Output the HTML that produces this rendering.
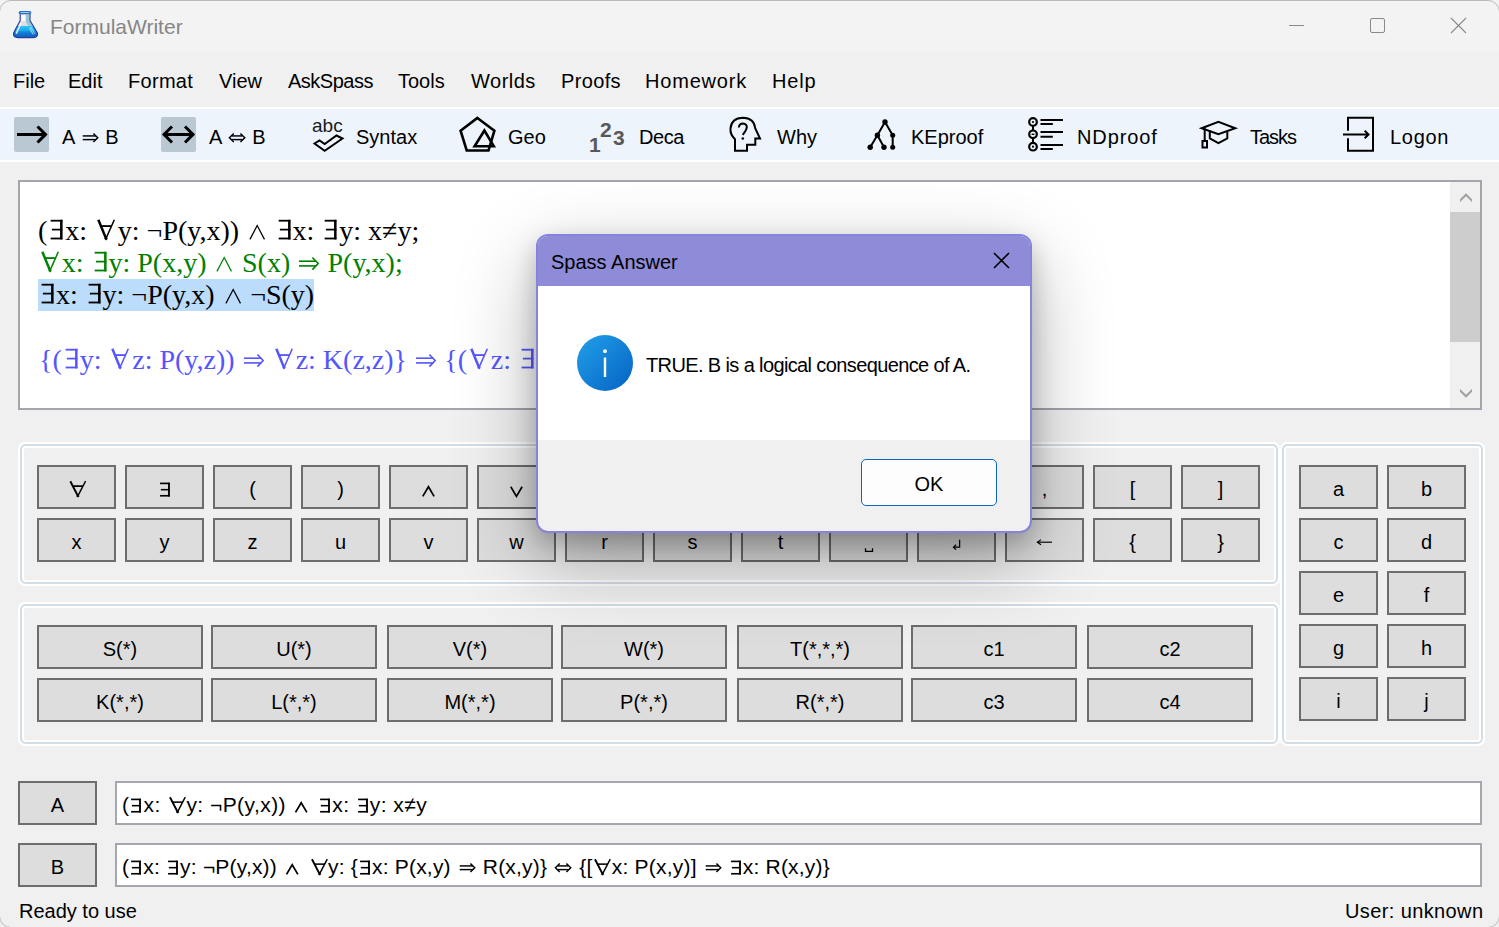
<!DOCTYPE html>
<html><head><meta charset="utf-8"><title>FormulaWriter</title>
<style>
html,body{margin:0;padding:0}
body{width:1499px;height:927px;position:relative;overflow:hidden;background:#f0f0f0;font-family:'Liberation Sans', sans-serif}
.t{position:absolute;white-space:pre}
svg{display:block}
svg.gl{display:inline-block}
</style></head><body>
<div style="position:absolute;left:0px;top:0px;width:1499px;height:51px;box-sizing:border-box;background:#f3f3f3"></div>
<div style="position:absolute;left:-1px;top:0px;width:1501px;height:928px;box-sizing:border-box;border:1px solid #b9b9b9;border-radius:12px;pointer-events:none;z-index:50;background:transparent"></div>
<svg style="position:absolute;left:0px;top:0px" width="50" height="45" viewBox="0 0 50 45">
<defs>
<linearGradient id="liq" x1="0" y1="0" x2="0" y2="1"><stop offset="0" stop-color="#30c4f6"/><stop offset="0.42" stop-color="#18a6ea"/><stop offset="0.5" stop-color="#1684da"/><stop offset="1" stop-color="#0a5cc0"/></linearGradient>
<linearGradient id="gls" x1="0" y1="0" x2="0" y2="1"><stop offset="0" stop-color="#e6ecef"/><stop offset="1" stop-color="#c8d1d6"/></linearGradient>
</defs>
<path d="M20.2,14 V20.6 L13.6,33 Q12.6,37.4 18,37.6 H33 Q38.4,37.4 37.4,33 L30,20.6 V14 Z" fill="url(#gls)"/>
<path d="M16.5,26 H33.6 L37.4,33 Q38.4,37.4 33,37.6 H18 Q12.6,37.4 13.6,33 Z" fill="url(#liq)"/>
<path d="M25.5,14.5 H29.6 V21 L32.5,26 H28.5 L25.5,21 Z" fill="#86c2d4" opacity="0.85"/>
<rect x="21.5" y="15" width="4" height="6" fill="#ffffff"/>
<path d="M16.2,33.6 L21.2,23" stroke="#ffffff" stroke-width="1.5" opacity="0.9"/>
<path d="M30.6,26.8 L34.6,33.6 M29.4,27.8 L33,34.4" stroke="#e6f6ff" stroke-width="0.8" opacity="0.9"/>
<path d="M20.2,14 V20.6 L13.6,33 Q12.6,37.4 18,37.6 H33 Q38.4,37.4 37.4,33 L30,20.6 V14" fill="none" stroke="#2e3a9c" stroke-width="1.1"/>
<rect x="18.7" y="11" width="12.6" height="3.2" rx="1.6" fill="#1e72d0"/>
<rect x="20.4" y="11.9" width="9.2" height="1.1" rx="0.55" fill="#b8c8d8"/>
</svg>
<div class="t" style="left:50px;top:16.22px;font-size:21px;line-height:21px;color:#868686;font-family:'Liberation Sans', sans-serif;">FormulaWriter</div>
<div style="position:absolute;left:1289px;top:25px;width:15px;height:1px;box-sizing:border-box;background:#8a8a8a"></div>
<div style="position:absolute;left:1370px;top:18px;width:15px;height:15px;box-sizing:border-box;border:1px solid #8a8a8a;border-radius:2px"></div>
<svg style="position:absolute;left:1450px;top:17px" width="17" height="17" viewBox="0 0 17 17"><path d="M1,1 L16,16 M16,1 L1,16" stroke="#8a8a8a" stroke-width="1.1"/></svg>
<div style="position:absolute;left:0px;top:51px;width:1499px;height:56px;box-sizing:border-box;background:#f0f0f0"></div>
<div class="t" style="left:13px;top:71.07px;font-size:20px;line-height:20px;color:#000;font-family:'Liberation Sans', sans-serif;letter-spacing:0px">File</div>
<div class="t" style="left:68px;top:71.07px;font-size:20px;line-height:20px;color:#000;font-family:'Liberation Sans', sans-serif;letter-spacing:0px">Edit</div>
<div class="t" style="left:128px;top:71.07px;font-size:20px;line-height:20px;color:#000;font-family:'Liberation Sans', sans-serif;letter-spacing:0.3px">Format</div>
<div class="t" style="left:219px;top:71.07px;font-size:20px;line-height:20px;color:#000;font-family:'Liberation Sans', sans-serif;letter-spacing:0px">View</div>
<div class="t" style="left:288px;top:71.07px;font-size:20px;line-height:20px;color:#000;font-family:'Liberation Sans', sans-serif;letter-spacing:-0.5px">AskSpass</div>
<div class="t" style="left:398px;top:71.07px;font-size:20px;line-height:20px;color:#000;font-family:'Liberation Sans', sans-serif;letter-spacing:0px">Tools</div>
<div class="t" style="left:471px;top:71.07px;font-size:20px;line-height:20px;color:#000;font-family:'Liberation Sans', sans-serif;letter-spacing:0.5px">Worlds</div>
<div class="t" style="left:561px;top:71.07px;font-size:20px;line-height:20px;color:#000;font-family:'Liberation Sans', sans-serif;letter-spacing:0.35px">Proofs</div>
<div class="t" style="left:645px;top:71.07px;font-size:20px;line-height:20px;color:#000;font-family:'Liberation Sans', sans-serif;letter-spacing:0.8px">Homework</div>
<div class="t" style="left:772px;top:71.07px;font-size:20px;line-height:20px;color:#000;font-family:'Liberation Sans', sans-serif;letter-spacing:0.8px">Help</div>
<div style="position:absolute;left:0px;top:107px;width:1499px;height:2px;box-sizing:border-box;background:#ffffff"></div>
<div style="position:absolute;left:0px;top:109px;width:1499px;height:51px;box-sizing:border-box;background:#edf4fc"></div>
<div style="position:absolute;left:0px;top:160px;width:1499px;height:2px;box-sizing:border-box;background:#ffffff"></div>
<div style="position:absolute;left:14px;top:117px;width:35px;height:35px;box-sizing:border-box;background:#bac8d3;border-radius:2px"></div>
<div style="position:absolute;left:161px;top:117px;width:35px;height:35px;box-sizing:border-box;background:#bac8d3;border-radius:2px"></div>
<svg style="position:absolute;left:14px;top:117px" width="35" height="35" viewBox="0 0 35 35"><path d="M3,17.4 H31.5 M23.5,9.5 L31.5,17.4 L23.5,25.5" fill="none" stroke="#000" stroke-width="3"/></svg>
<svg style="position:absolute;left:161px;top:117px" width="35" height="35" viewBox="0 0 35 35"><path d="M3,17.4 H32 M11,9.5 L3,17.4 L11,25.5 M24,9.5 L32,17.4 L24,25.5" fill="none" stroke="#000" stroke-width="3"/></svg>
<div class="t" style="left:62px;top:126.57px;font-size:20px;line-height:20px;color:#000;font-family:'Liberation Sans', sans-serif;letter-spacing:0px">A <svg class="gl" width="0.997em" height="1.050em" viewBox="0 -800 950 1000" style="vertical-align:-0.210em"><g fill="none" stroke="currentColor" stroke-linejoin="miter"><path d="M130,-375 H760" stroke-width="70"/><path d="M130,-200 H760" stroke-width="70"/><path d="M640,-490 L845,-287 L640,-85" stroke-width="70"/></g></svg> B</div>
<div class="t" style="left:209px;top:126.57px;font-size:20px;line-height:20px;color:#000;font-family:'Liberation Sans', sans-serif;letter-spacing:0px">A <svg class="gl" width="0.997em" height="1.050em" viewBox="0 -800 950 1000" style="vertical-align:-0.210em"><g fill="none" stroke="currentColor" stroke-linejoin="miter"><path d="M230,-375 H730" stroke-width="70"/><path d="M230,-200 H730" stroke-width="70"/><path d="M640,-490 L845,-287 L640,-85" stroke-width="70"/><path d="M320,-490 L115,-287 L320,-85" stroke-width="70"/></g></svg> B</div>
<div class="t" style="left:356px;top:126.57px;font-size:20px;line-height:20px;color:#000;font-family:'Liberation Sans', sans-serif;letter-spacing:0px">Syntax</div>
<div class="t" style="left:508px;top:126.57px;font-size:20px;line-height:20px;color:#000;font-family:'Liberation Sans', sans-serif;letter-spacing:0px">Geo</div>
<div class="t" style="left:639px;top:126.57px;font-size:20px;line-height:20px;color:#000;font-family:'Liberation Sans', sans-serif;letter-spacing:-0.4px">Deca</div>
<div class="t" style="left:777px;top:126.57px;font-size:20px;line-height:20px;color:#000;font-family:'Liberation Sans', sans-serif;letter-spacing:0px">Why</div>
<div class="t" style="left:911px;top:126.57px;font-size:20px;line-height:20px;color:#000;font-family:'Liberation Sans', sans-serif;letter-spacing:0px">KEproof</div>
<div class="t" style="left:1077px;top:126.57px;font-size:20px;line-height:20px;color:#000;font-family:'Liberation Sans', sans-serif;letter-spacing:0.9px">NDproof</div>
<div class="t" style="left:1250px;top:126.57px;font-size:20px;line-height:20px;color:#000;font-family:'Liberation Sans', sans-serif;letter-spacing:-1px">Tasks</div>
<div class="t" style="left:1390px;top:126.57px;font-size:20px;line-height:20px;color:#000;font-family:'Liberation Sans', sans-serif;letter-spacing:0.7px">Logon</div>
<div class="t" style="left:312px;top:115.92px;font-size:19px;line-height:19px;color:#1a1a1a;font-family:'Liberation Sans', sans-serif;letter-spacing:0px">abc</div>
<svg style="position:absolute;left:310px;top:130px" width="36" height="24" viewBox="0 0 36 24"><path d="M4.5,13.5 L9.5,10.4 L14.7,14 L26.5,5.5 L32.5,8.5 L14.7,20.8 Z" fill="none" stroke="#000" stroke-width="2"/></svg>
<svg style="position:absolute;left:455px;top:112px" width="45" height="45" viewBox="0 0 45 45"><path d="M22.4,6 L39.4,18.7 L33.5,38.5 H11.7 L5.6,18.7 Z" fill="none" stroke="#000" stroke-width="2.6"/><path d="M29.4,18.5 L19.6,34.2 H38.8 Z" fill="none" stroke="#000" stroke-width="2.6"/></svg>
<div class="t" style="left:589px;top:118px;font:bold 21px/21px 'Liberation Sans', sans-serif;color:#585858;width:40px;height:36px"><span style="position:absolute;left:0;top:16px">1</span><span style="position:absolute;left:11px;top:1px">2</span><span style="position:absolute;left:24px;top:9px">3</span></div>
<svg style="position:absolute;left:723px;top:112px" width="45" height="45" viewBox="0 0 45 45"><path d="M12,38.8 V27.2 Q7,22.5 7.5,16.5 Q8.5,6 20,5.8 Q31,6 32.2,16.2 L37,26.5 H32.3 V32.8 H24 V38.8 Z" fill="none" stroke="#000" stroke-width="2"/><path d="M15.8,15.5 Q16.3,11.5 20,11.5 Q23.8,11.8 23.8,15.3 Q23.5,18 19.7,22.8" fill="none" stroke="#000" stroke-width="2"/><circle cx="19.8" cy="26.5" r="1.3" fill="#000"/></svg>
<svg style="position:absolute;left:859px;top:112px" width="45" height="45" viewBox="0 0 45 45"><path d="M26,10 L18.4,23.3 L11.2,35.2 M18.4,23.3 L25,35.2 M26,10 L33.7,23.3 V35.2" fill="none" stroke="#000" stroke-width="2"/><circle cx="26" cy="10" r="2.7"/><circle cx="18.4" cy="23.3" r="2.7"/><circle cx="33.7" cy="23.3" r="2.5"/><circle cx="11.2" cy="35.2" r="2.7"/><circle cx="25" cy="35.2" r="2.7"/><circle cx="33.7" cy="35.2" r="2.5"/></svg>
<svg style="position:absolute;left:1022px;top:112px" width="45" height="45" viewBox="0 0 45 45"><path d="M11,14 V30 M11,38 V30" stroke="#000" stroke-width="2"/><circle cx="11" cy="10" r="3.8" fill="#edf4fc" stroke="#000" stroke-width="2.2"/><circle cx="11" cy="22.3" r="3.8" fill="#edf4fc" stroke="#000" stroke-width="2.2"/><circle cx="11" cy="34.7" r="3.8" fill="#edf4fc" stroke="#000" stroke-width="2.2"/><circle cx="11" cy="10" r="1.1"/><rect x="9.6" y="21.6" width="2.8" height="1.4"/><circle cx="11" cy="34.7" r="1.1"/><path d="M18.5,8 H41 M18.5,12 H30.8 M18.5,19.9 H41 M18.5,24.8 H30.8 M18.5,33 H41 M18.5,36.9 H30.8" stroke="#000" stroke-width="2"/></svg>
<svg style="position:absolute;left:1196px;top:112px" width="45" height="45" viewBox="0 0 45 45"><path d="M5.6,16.3 L22.4,9.7 L39.3,16.3 L22.4,22.3 Z" fill="none" stroke="#000" stroke-width="2"/><path d="M13.8,18.5 V26.5 L22.4,31.1 L31.3,26.5 V18.5" fill="none" stroke="#000" stroke-width="2"/><path d="M8.7,16.3 V29" stroke="#000" stroke-width="2"/><rect x="6.5" y="29" width="4.5" height="6.5" fill="none" stroke="#000" stroke-width="2"/></svg>
<svg style="position:absolute;left:1338px;top:112px" width="45" height="45" viewBox="0 0 45 45"><path d="M10,18.7 V5.8 H35 V38.8 H10 V26.2" fill="none" stroke="#000" stroke-width="2"/><path d="M5,22.4 H30.5 M26.7,18.7 L30.5,22.4 L26.7,26.2" fill="none" stroke="#000" stroke-width="2"/></svg>
<div style="position:absolute;left:18px;top:180px;width:1464px;height:230px;box-sizing:border-box;background:#fff;border:2px solid #a4a4ac"></div>
<div style="position:absolute;left:1450px;top:182px;width:30px;height:226px;box-sizing:border-box;background:#f0f0f0"></div>
<div style="position:absolute;left:1450px;top:212px;width:30px;height:130px;box-sizing:border-box;background:#cdcdcd"></div>
<svg style="position:absolute;left:1459px;top:192px" width="14" height="12" viewBox="0 0 14 12"><path d="M1,10 L7,4.3 L13,10 L13,7.2 L7,1.2 L1,7.2 Z" fill="#a0a0a0"/></svg>
<svg style="position:absolute;left:1459px;top:388px" width="14" height="12" viewBox="0 0 14 12"><path d="M1,1 L7,6.7 L13,1 L13,3.8 L7,9.8 L1,3.8 Z" fill="#a0a0a0"/></svg>
<div style="position:absolute;left:38px;top:279px;width:276px;height:32px;box-sizing:border-box;background:#bbdcfb"></div>
<div class="t" style="left:38px;top:216.55px;font-size:28px;line-height:28px;color:#000;font-family:'Liberation Serif', serif;">(<svg class="gl" width="0.640em" height="1.000em" viewBox="0 -800 640 1000" style="vertical-align:-0.200em"><g fill="none" stroke="currentColor" stroke-linejoin="miter"><path d="M130,-668 H550" stroke-width="65"/><path d="M175,-350 H550" stroke-width="62"/><path d="M130,-32 H550" stroke-width="65"/><path d="M512,-700 V0" stroke-width="90"/></g></svg>x: <svg class="gl" width="0.850em" height="1.000em" viewBox="0 -800 850 1000" style="vertical-align:-0.200em"><g fill="none" stroke="currentColor" stroke-linejoin="miter"><path d="M155,-700 L430,-30" stroke-width="88"/><path d="M725,-700 L430,-30" stroke-width="55"/><path d="M245,-476 H620" stroke-width="65"/><path d="M385,-45 L430,0 L475,-45" stroke-width="55"/></g></svg>y: ¬P(y,x)) <svg class="gl" width="0.770em" height="1.000em" viewBox="0 -800 770 1000" style="vertical-align:-0.200em"><g fill="none" stroke="currentColor" stroke-linejoin="miter"><path d="M140,0 L400,-495 L660,0" stroke-width="45"/></g></svg> <svg class="gl" width="0.640em" height="1.000em" viewBox="0 -800 640 1000" style="vertical-align:-0.200em"><g fill="none" stroke="currentColor" stroke-linejoin="miter"><path d="M130,-668 H550" stroke-width="65"/><path d="M175,-350 H550" stroke-width="62"/><path d="M130,-32 H550" stroke-width="65"/><path d="M512,-700 V0" stroke-width="90"/></g></svg>x: <svg class="gl" width="0.640em" height="1.000em" viewBox="0 -800 640 1000" style="vertical-align:-0.200em"><g fill="none" stroke="currentColor" stroke-linejoin="miter"><path d="M130,-668 H550" stroke-width="65"/><path d="M175,-350 H550" stroke-width="62"/><path d="M130,-32 H550" stroke-width="65"/><path d="M512,-700 V0" stroke-width="90"/></g></svg>y: x≠y;</div>
<div class="t" style="left:38px;top:248.55px;font-size:28px;line-height:28px;color:#008000;font-family:'Liberation Serif', serif;"><svg class="gl" width="0.850em" height="1.000em" viewBox="0 -800 850 1000" style="vertical-align:-0.200em"><g fill="none" stroke="currentColor" stroke-linejoin="miter"><path d="M155,-700 L430,-30" stroke-width="88"/><path d="M725,-700 L430,-30" stroke-width="55"/><path d="M245,-476 H620" stroke-width="65"/><path d="M385,-45 L430,0 L475,-45" stroke-width="55"/></g></svg>x: <svg class="gl" width="0.640em" height="1.000em" viewBox="0 -800 640 1000" style="vertical-align:-0.200em"><g fill="none" stroke="currentColor" stroke-linejoin="miter"><path d="M130,-668 H550" stroke-width="65"/><path d="M175,-350 H550" stroke-width="62"/><path d="M130,-32 H550" stroke-width="65"/><path d="M512,-700 V0" stroke-width="90"/></g></svg>y: P(x,y) <svg class="gl" width="0.770em" height="1.000em" viewBox="0 -800 770 1000" style="vertical-align:-0.200em"><g fill="none" stroke="currentColor" stroke-linejoin="miter"><path d="M140,0 L400,-495 L660,0" stroke-width="45"/></g></svg> S(x) <svg class="gl" width="0.830em" height="1.000em" viewBox="0 -800 830 1000" style="vertical-align:-0.200em"><g fill="none" stroke="currentColor" stroke-linejoin="miter"><path d="M70,-364 H690" stroke-width="58"/><path d="M70,-196 H690" stroke-width="58"/><path d="M550,-495 L755,-280 L550,-65" stroke-width="58"/></g></svg> P(y,x);</div>
<div class="t" style="left:38px;top:280.55px;font-size:28px;line-height:28px;color:#000;font-family:'Liberation Serif', serif;"><svg class="gl" width="0.640em" height="1.000em" viewBox="0 -800 640 1000" style="vertical-align:-0.200em"><g fill="none" stroke="currentColor" stroke-linejoin="miter"><path d="M130,-668 H550" stroke-width="65"/><path d="M175,-350 H550" stroke-width="62"/><path d="M130,-32 H550" stroke-width="65"/><path d="M512,-700 V0" stroke-width="90"/></g></svg>x: <svg class="gl" width="0.640em" height="1.000em" viewBox="0 -800 640 1000" style="vertical-align:-0.200em"><g fill="none" stroke="currentColor" stroke-linejoin="miter"><path d="M130,-668 H550" stroke-width="65"/><path d="M175,-350 H550" stroke-width="62"/><path d="M130,-32 H550" stroke-width="65"/><path d="M512,-700 V0" stroke-width="90"/></g></svg>y: ¬P(y,x) <svg class="gl" width="0.770em" height="1.000em" viewBox="0 -800 770 1000" style="vertical-align:-0.200em"><g fill="none" stroke="currentColor" stroke-linejoin="miter"><path d="M140,0 L400,-495 L660,0" stroke-width="45"/></g></svg> ¬S(y)</div>
<div class="t" style="left:39px;top:345.55px;font-size:28px;line-height:28px;color:#5555ff;font-family:'Liberation Serif', serif;">{(<svg class="gl" width="0.640em" height="1.000em" viewBox="0 -800 640 1000" style="vertical-align:-0.200em"><g fill="none" stroke="currentColor" stroke-linejoin="miter"><path d="M130,-668 H550" stroke-width="65"/><path d="M175,-350 H550" stroke-width="62"/><path d="M130,-32 H550" stroke-width="65"/><path d="M512,-700 V0" stroke-width="90"/></g></svg>y: <svg class="gl" width="0.850em" height="1.000em" viewBox="0 -800 850 1000" style="vertical-align:-0.200em"><g fill="none" stroke="currentColor" stroke-linejoin="miter"><path d="M155,-700 L430,-30" stroke-width="88"/><path d="M725,-700 L430,-30" stroke-width="55"/><path d="M245,-476 H620" stroke-width="65"/><path d="M385,-45 L430,0 L475,-45" stroke-width="55"/></g></svg>z: P(y,z)) <svg class="gl" width="0.830em" height="1.000em" viewBox="0 -800 830 1000" style="vertical-align:-0.200em"><g fill="none" stroke="currentColor" stroke-linejoin="miter"><path d="M70,-364 H690" stroke-width="58"/><path d="M70,-196 H690" stroke-width="58"/><path d="M550,-495 L755,-280 L550,-65" stroke-width="58"/></g></svg> <svg class="gl" width="0.850em" height="1.000em" viewBox="0 -800 850 1000" style="vertical-align:-0.200em"><g fill="none" stroke="currentColor" stroke-linejoin="miter"><path d="M155,-700 L430,-30" stroke-width="88"/><path d="M725,-700 L430,-30" stroke-width="55"/><path d="M245,-476 H620" stroke-width="65"/><path d="M385,-45 L430,0 L475,-45" stroke-width="55"/></g></svg>z: K(z,z)} <svg class="gl" width="0.830em" height="1.000em" viewBox="0 -800 830 1000" style="vertical-align:-0.200em"><g fill="none" stroke="currentColor" stroke-linejoin="miter"><path d="M70,-364 H690" stroke-width="58"/><path d="M70,-196 H690" stroke-width="58"/><path d="M550,-495 L755,-280 L550,-65" stroke-width="58"/></g></svg> {(<svg class="gl" width="0.850em" height="1.000em" viewBox="0 -800 850 1000" style="vertical-align:-0.200em"><g fill="none" stroke="currentColor" stroke-linejoin="miter"><path d="M155,-700 L430,-30" stroke-width="88"/><path d="M725,-700 L430,-30" stroke-width="55"/><path d="M245,-476 H620" stroke-width="65"/><path d="M385,-45 L430,0 L475,-45" stroke-width="55"/></g></svg>z: <svg class="gl" width="0.640em" height="1.000em" viewBox="0 -800 640 1000" style="vertical-align:-0.200em"><g fill="none" stroke="currentColor" stroke-linejoin="miter"><path d="M130,-668 H550" stroke-width="65"/><path d="M175,-350 H550" stroke-width="62"/><path d="M130,-32 H550" stroke-width="65"/><path d="M512,-700 V0" stroke-width="90"/></g></svg>y: P(y,z)) <svg class="gl" width="0.830em" height="1.000em" viewBox="0 -800 830 1000" style="vertical-align:-0.200em"><g fill="none" stroke="currentColor" stroke-linejoin="miter"><path d="M70,-364 H690" stroke-width="58"/><path d="M70,-196 H690" stroke-width="58"/><path d="M550,-495 L755,-280 L550,-65" stroke-width="58"/></g></svg> K(z,z)}</div>
<div style="position:absolute;left:18px;top:442px;width:1262px;height:144px;box-sizing:border-box;border:2px solid #fff;border-radius:7px"></div>
<div style="position:absolute;left:20px;top:444px;width:1258px;height:140px;box-sizing:border-box;border:2px solid #d3dde5;border-radius:6px"></div>
<div style="position:absolute;left:22px;top:446px;width:1254px;height:136px;box-sizing:border-box;border:2px solid #fff;border-radius:4px"></div>
<div style="position:absolute;left:18px;top:602px;width:1262px;height:144px;box-sizing:border-box;border:2px solid #fff;border-radius:7px"></div>
<div style="position:absolute;left:20px;top:604px;width:1258px;height:140px;box-sizing:border-box;border:2px solid #d3dde5;border-radius:6px"></div>
<div style="position:absolute;left:22px;top:606px;width:1254px;height:136px;box-sizing:border-box;border:2px solid #fff;border-radius:4px"></div>
<div style="position:absolute;left:1280px;top:442px;width:205px;height:304px;box-sizing:border-box;border:2px solid #fff;border-radius:7px"></div>
<div style="position:absolute;left:1282px;top:444px;width:201px;height:300px;box-sizing:border-box;border:2px solid #d3dde5;border-radius:6px"></div>
<div style="position:absolute;left:1284px;top:446px;width:197px;height:296px;box-sizing:border-box;border:2px solid #fff;border-radius:4px"></div>
<div style="position:absolute;left:37px;top:465px;width:79px;height:44px;box-sizing:border-box;background:#dddddd;border:2px solid #6d6d6d"></div>
<div class="t" style="left:76.5px;transform:translateX(-50%);top:479.07px;font-size:20px;line-height:20px;color:#000;font-family:'Liberation Sans', sans-serif;"><svg class="gl" width="0.968em" height="1.100em" viewBox="0 -800 880 1000" style="vertical-align:-0.220em"><g fill="none" stroke="currentColor" stroke-linejoin="miter"><path d="M135,-700 L480,-35" stroke-width="88"/><path d="M830,-700 L480,-35" stroke-width="65"/><path d="M260,-476 H700" stroke-width="70"/><path d="M425,-45 L480,0 L535,-45" stroke-width="65"/></g></svg></div>
<div style="position:absolute;left:37px;top:518px;width:79px;height:44px;box-sizing:border-box;background:#dddddd;border:2px solid #6d6d6d"></div>
<div class="t" style="left:76.5px;transform:translateX(-50%);top:532.07px;font-size:20px;line-height:20px;color:#000;font-family:'Liberation Sans', sans-serif;">x</div>
<div style="position:absolute;left:125px;top:465px;width:79px;height:44px;box-sizing:border-box;background:#dddddd;border:2px solid #6d6d6d"></div>
<div class="t" style="left:164.5px;transform:translateX(-50%);top:479.07px;font-size:20px;line-height:20px;color:#000;font-family:'Liberation Sans', sans-serif;"><svg class="gl" width="0.704em" height="1.100em" viewBox="0 -800 640 1000" style="vertical-align:-0.220em"><g fill="none" stroke="currentColor" stroke-linejoin="miter"><path d="M95,-600 H540" stroke-width="75"/><path d="M130,-315 H540" stroke-width="70"/><path d="M95,-38 H540" stroke-width="75"/><path d="M500,-635 V0" stroke-width="85"/></g></svg></div>
<div style="position:absolute;left:125px;top:518px;width:79px;height:44px;box-sizing:border-box;background:#dddddd;border:2px solid #6d6d6d"></div>
<div class="t" style="left:164.5px;transform:translateX(-50%);top:532.07px;font-size:20px;line-height:20px;color:#000;font-family:'Liberation Sans', sans-serif;">y</div>
<div style="position:absolute;left:213px;top:465px;width:79px;height:44px;box-sizing:border-box;background:#dddddd;border:2px solid #6d6d6d"></div>
<div class="t" style="left:252.5px;transform:translateX(-50%);top:479.07px;font-size:20px;line-height:20px;color:#000;font-family:'Liberation Sans', sans-serif;">(</div>
<div style="position:absolute;left:213px;top:518px;width:79px;height:44px;box-sizing:border-box;background:#dddddd;border:2px solid #6d6d6d"></div>
<div class="t" style="left:252.5px;transform:translateX(-50%);top:532.07px;font-size:20px;line-height:20px;color:#000;font-family:'Liberation Sans', sans-serif;">z</div>
<div style="position:absolute;left:301px;top:465px;width:79px;height:44px;box-sizing:border-box;background:#dddddd;border:2px solid #6d6d6d"></div>
<div class="t" style="left:340.5px;transform:translateX(-50%);top:479.07px;font-size:20px;line-height:20px;color:#000;font-family:'Liberation Sans', sans-serif;">)</div>
<div style="position:absolute;left:301px;top:518px;width:79px;height:44px;box-sizing:border-box;background:#dddddd;border:2px solid #6d6d6d"></div>
<div class="t" style="left:340.5px;transform:translateX(-50%);top:532.07px;font-size:20px;line-height:20px;color:#000;font-family:'Liberation Sans', sans-serif;">u</div>
<div style="position:absolute;left:389px;top:465px;width:79px;height:44px;box-sizing:border-box;background:#dddddd;border:2px solid #6d6d6d"></div>
<div class="t" style="left:428.5px;transform:translateX(-50%);top:479.07px;font-size:20px;line-height:20px;color:#000;font-family:'Liberation Sans', sans-serif;"><svg class="gl" width="0.975em" height="1.100em" viewBox="0 -800 886 1000" style="vertical-align:-0.220em"><g fill="none" stroke="currentColor" stroke-linejoin="miter"><path d="M160,-10 L418,-450 L676,-10" stroke-width="78"/></g></svg></div>
<div style="position:absolute;left:389px;top:518px;width:79px;height:44px;box-sizing:border-box;background:#dddddd;border:2px solid #6d6d6d"></div>
<div class="t" style="left:428.5px;transform:translateX(-50%);top:532.07px;font-size:20px;line-height:20px;color:#000;font-family:'Liberation Sans', sans-serif;">v</div>
<div style="position:absolute;left:477px;top:465px;width:79px;height:44px;box-sizing:border-box;background:#dddddd;border:2px solid #6d6d6d"></div>
<div class="t" style="left:516.5px;transform:translateX(-50%);top:479.07px;font-size:20px;line-height:20px;color:#000;font-family:'Liberation Sans', sans-serif;"><svg class="gl" width="0.975em" height="1.100em" viewBox="0 -800 886 1000" style="vertical-align:-0.220em"><g fill="none" stroke="currentColor" stroke-linejoin="miter"><path d="M160,-450 L418,-10 L676,-450" stroke-width="78"/></g></svg></div>
<div style="position:absolute;left:477px;top:518px;width:79px;height:44px;box-sizing:border-box;background:#dddddd;border:2px solid #6d6d6d"></div>
<div class="t" style="left:516.5px;transform:translateX(-50%);top:532.07px;font-size:20px;line-height:20px;color:#000;font-family:'Liberation Sans', sans-serif;">w</div>
<div style="position:absolute;left:565px;top:465px;width:79px;height:44px;box-sizing:border-box;background:#dddddd;border:2px solid #6d6d6d"></div>
<div class="t" style="left:604.5px;transform:translateX(-50%);top:479.07px;font-size:20px;line-height:20px;color:#000;font-family:'Liberation Sans', sans-serif;"></div>
<div style="position:absolute;left:565px;top:518px;width:79px;height:44px;box-sizing:border-box;background:#dddddd;border:2px solid #6d6d6d"></div>
<div class="t" style="left:604.5px;transform:translateX(-50%);top:532.07px;font-size:20px;line-height:20px;color:#000;font-family:'Liberation Sans', sans-serif;">r</div>
<div style="position:absolute;left:653px;top:465px;width:79px;height:44px;box-sizing:border-box;background:#dddddd;border:2px solid #6d6d6d"></div>
<div class="t" style="left:692.5px;transform:translateX(-50%);top:479.07px;font-size:20px;line-height:20px;color:#000;font-family:'Liberation Sans', sans-serif;"></div>
<div style="position:absolute;left:653px;top:518px;width:79px;height:44px;box-sizing:border-box;background:#dddddd;border:2px solid #6d6d6d"></div>
<div class="t" style="left:692.5px;transform:translateX(-50%);top:532.07px;font-size:20px;line-height:20px;color:#000;font-family:'Liberation Sans', sans-serif;">s</div>
<div style="position:absolute;left:741px;top:465px;width:79px;height:44px;box-sizing:border-box;background:#dddddd;border:2px solid #6d6d6d"></div>
<div class="t" style="left:780.5px;transform:translateX(-50%);top:479.07px;font-size:20px;line-height:20px;color:#000;font-family:'Liberation Sans', sans-serif;"></div>
<div style="position:absolute;left:741px;top:518px;width:79px;height:44px;box-sizing:border-box;background:#dddddd;border:2px solid #6d6d6d"></div>
<div class="t" style="left:780.5px;transform:translateX(-50%);top:532.07px;font-size:20px;line-height:20px;color:#000;font-family:'Liberation Sans', sans-serif;">t</div>
<div style="position:absolute;left:829px;top:465px;width:79px;height:44px;box-sizing:border-box;background:#dddddd;border:2px solid #6d6d6d"></div>
<div class="t" style="left:868.5px;transform:translateX(-50%);top:479.07px;font-size:20px;line-height:20px;color:#000;font-family:'Liberation Sans', sans-serif;"></div>
<div style="position:absolute;left:829px;top:518px;width:79px;height:44px;box-sizing:border-box;background:#dddddd;border:2px solid #6d6d6d"></div>
<div class="t" style="left:868.5px;transform:translateX(-50%);top:532.07px;font-size:20px;line-height:20px;color:#000;font-family:'Liberation Sans', sans-serif;"><svg class="gl" width="0.600em" height="1.000em" viewBox="0 -800 600 1000" style="vertical-align:-0.200em"><g fill="none" stroke="currentColor" stroke-linejoin="miter"><path d="M125,-40 V120 H475 V-40" stroke-width="65"/></g></svg></div>
<div style="position:absolute;left:917px;top:465px;width:79px;height:44px;box-sizing:border-box;background:#dddddd;border:2px solid #6d6d6d"></div>
<div class="t" style="left:956.5px;transform:translateX(-50%);top:479.07px;font-size:20px;line-height:20px;color:#000;font-family:'Liberation Sans', sans-serif;"></div>
<div style="position:absolute;left:917px;top:518px;width:79px;height:44px;box-sizing:border-box;background:#dddddd;border:2px solid #6d6d6d"></div>
<div class="t" style="left:956.5px;transform:translateX(-50%);top:532.07px;font-size:20px;line-height:20px;color:#000;font-family:'Liberation Sans', sans-serif;"><svg class="gl" width="0.600em" height="1.000em" viewBox="0 -800 600 1000" style="vertical-align:-0.200em"><g fill="none" stroke="currentColor" stroke-linejoin="miter"><path d="M430,-460 V-90 H130" stroke-width="65"/><path d="M250,-210 L130,-90 L250,30" stroke-width="65"/></g></svg></div>
<div style="position:absolute;left:1005px;top:465px;width:79px;height:44px;box-sizing:border-box;background:#dddddd;border:2px solid #6d6d6d"></div>
<div class="t" style="left:1044.5px;transform:translateX(-50%);top:479.07px;font-size:20px;line-height:20px;color:#000;font-family:'Liberation Sans', sans-serif;">,</div>
<div style="position:absolute;left:1005px;top:518px;width:79px;height:44px;box-sizing:border-box;background:#dddddd;border:2px solid #6d6d6d"></div>
<div class="t" style="left:1044.5px;transform:translateX(-50%);top:532.07px;font-size:20px;line-height:20px;color:#000;font-family:'Liberation Sans', sans-serif;"><svg class="gl" width="1.000em" height="1.000em" viewBox="0 -800 1000 1000" style="vertical-align:-0.200em"><g fill="none" stroke="currentColor" stroke-linejoin="miter"><path d="M120,-340 H850" stroke-width="58"/><path d="M300,-470 L120,-340 L300,-210" stroke-width="58"/></g></svg></div>
<div style="position:absolute;left:1093px;top:465px;width:79px;height:44px;box-sizing:border-box;background:#dddddd;border:2px solid #6d6d6d"></div>
<div class="t" style="left:1132.5px;transform:translateX(-50%);top:479.07px;font-size:20px;line-height:20px;color:#000;font-family:'Liberation Sans', sans-serif;">[</div>
<div style="position:absolute;left:1093px;top:518px;width:79px;height:44px;box-sizing:border-box;background:#dddddd;border:2px solid #6d6d6d"></div>
<div class="t" style="left:1132.5px;transform:translateX(-50%);top:532.07px;font-size:20px;line-height:20px;color:#000;font-family:'Liberation Sans', sans-serif;">{</div>
<div style="position:absolute;left:1181px;top:465px;width:79px;height:44px;box-sizing:border-box;background:#dddddd;border:2px solid #6d6d6d"></div>
<div class="t" style="left:1220.5px;transform:translateX(-50%);top:479.07px;font-size:20px;line-height:20px;color:#000;font-family:'Liberation Sans', sans-serif;">]</div>
<div style="position:absolute;left:1181px;top:518px;width:79px;height:44px;box-sizing:border-box;background:#dddddd;border:2px solid #6d6d6d"></div>
<div class="t" style="left:1220.5px;transform:translateX(-50%);top:532.07px;font-size:20px;line-height:20px;color:#000;font-family:'Liberation Sans', sans-serif;">}</div>
<div style="position:absolute;left:37px;top:625px;width:166px;height:44px;box-sizing:border-box;background:#dddddd;border:2px solid #6d6d6d"></div>
<div class="t" style="left:120.0px;transform:translateX(-50%);top:639.07px;font-size:20px;line-height:20px;color:#000;font-family:'Liberation Sans', sans-serif;">S(*)</div>
<div style="position:absolute;left:37px;top:678px;width:166px;height:44px;box-sizing:border-box;background:#dddddd;border:2px solid #6d6d6d"></div>
<div class="t" style="left:120.0px;transform:translateX(-50%);top:692.07px;font-size:20px;line-height:20px;color:#000;font-family:'Liberation Sans', sans-serif;">K(*,*)</div>
<div style="position:absolute;left:211px;top:625px;width:166px;height:44px;box-sizing:border-box;background:#dddddd;border:2px solid #6d6d6d"></div>
<div class="t" style="left:294.0px;transform:translateX(-50%);top:639.07px;font-size:20px;line-height:20px;color:#000;font-family:'Liberation Sans', sans-serif;">U(*)</div>
<div style="position:absolute;left:211px;top:678px;width:166px;height:44px;box-sizing:border-box;background:#dddddd;border:2px solid #6d6d6d"></div>
<div class="t" style="left:294.0px;transform:translateX(-50%);top:692.07px;font-size:20px;line-height:20px;color:#000;font-family:'Liberation Sans', sans-serif;">L(*,*)</div>
<div style="position:absolute;left:387px;top:625px;width:166px;height:44px;box-sizing:border-box;background:#dddddd;border:2px solid #6d6d6d"></div>
<div class="t" style="left:470.0px;transform:translateX(-50%);top:639.07px;font-size:20px;line-height:20px;color:#000;font-family:'Liberation Sans', sans-serif;">V(*)</div>
<div style="position:absolute;left:387px;top:678px;width:166px;height:44px;box-sizing:border-box;background:#dddddd;border:2px solid #6d6d6d"></div>
<div class="t" style="left:470.0px;transform:translateX(-50%);top:692.07px;font-size:20px;line-height:20px;color:#000;font-family:'Liberation Sans', sans-serif;">M(*,*)</div>
<div style="position:absolute;left:561px;top:625px;width:166px;height:44px;box-sizing:border-box;background:#dddddd;border:2px solid #6d6d6d"></div>
<div class="t" style="left:644.0px;transform:translateX(-50%);top:639.07px;font-size:20px;line-height:20px;color:#000;font-family:'Liberation Sans', sans-serif;">W(*)</div>
<div style="position:absolute;left:561px;top:678px;width:166px;height:44px;box-sizing:border-box;background:#dddddd;border:2px solid #6d6d6d"></div>
<div class="t" style="left:644.0px;transform:translateX(-50%);top:692.07px;font-size:20px;line-height:20px;color:#000;font-family:'Liberation Sans', sans-serif;">P(*,*)</div>
<div style="position:absolute;left:737px;top:625px;width:166px;height:44px;box-sizing:border-box;background:#dddddd;border:2px solid #6d6d6d"></div>
<div class="t" style="left:820.0px;transform:translateX(-50%);top:639.07px;font-size:20px;line-height:20px;color:#000;font-family:'Liberation Sans', sans-serif;">T(*,*,*)</div>
<div style="position:absolute;left:737px;top:678px;width:166px;height:44px;box-sizing:border-box;background:#dddddd;border:2px solid #6d6d6d"></div>
<div class="t" style="left:820.0px;transform:translateX(-50%);top:692.07px;font-size:20px;line-height:20px;color:#000;font-family:'Liberation Sans', sans-serif;">R(*,*)</div>
<div style="position:absolute;left:911px;top:625px;width:166px;height:44px;box-sizing:border-box;background:#dddddd;border:2px solid #6d6d6d"></div>
<div class="t" style="left:994.0px;transform:translateX(-50%);top:639.07px;font-size:20px;line-height:20px;color:#000;font-family:'Liberation Sans', sans-serif;">c1</div>
<div style="position:absolute;left:911px;top:678px;width:166px;height:44px;box-sizing:border-box;background:#dddddd;border:2px solid #6d6d6d"></div>
<div class="t" style="left:994.0px;transform:translateX(-50%);top:692.07px;font-size:20px;line-height:20px;color:#000;font-family:'Liberation Sans', sans-serif;">c3</div>
<div style="position:absolute;left:1087px;top:625px;width:166px;height:44px;box-sizing:border-box;background:#dddddd;border:2px solid #6d6d6d"></div>
<div class="t" style="left:1170.0px;transform:translateX(-50%);top:639.07px;font-size:20px;line-height:20px;color:#000;font-family:'Liberation Sans', sans-serif;">c2</div>
<div style="position:absolute;left:1087px;top:678px;width:166px;height:44px;box-sizing:border-box;background:#dddddd;border:2px solid #6d6d6d"></div>
<div class="t" style="left:1170.0px;transform:translateX(-50%);top:692.07px;font-size:20px;line-height:20px;color:#000;font-family:'Liberation Sans', sans-serif;">c4</div>
<div style="position:absolute;left:1299px;top:465px;width:79px;height:44px;box-sizing:border-box;background:#dddddd;border:2px solid #6d6d6d"></div>
<div class="t" style="left:1338.5px;transform:translateX(-50%);top:479.07px;font-size:20px;line-height:20px;color:#000;font-family:'Liberation Sans', sans-serif;">a</div>
<div style="position:absolute;left:1387px;top:465px;width:79px;height:44px;box-sizing:border-box;background:#dddddd;border:2px solid #6d6d6d"></div>
<div class="t" style="left:1426.5px;transform:translateX(-50%);top:479.07px;font-size:20px;line-height:20px;color:#000;font-family:'Liberation Sans', sans-serif;">b</div>
<div style="position:absolute;left:1299px;top:518px;width:79px;height:44px;box-sizing:border-box;background:#dddddd;border:2px solid #6d6d6d"></div>
<div class="t" style="left:1338.5px;transform:translateX(-50%);top:532.07px;font-size:20px;line-height:20px;color:#000;font-family:'Liberation Sans', sans-serif;">c</div>
<div style="position:absolute;left:1387px;top:518px;width:79px;height:44px;box-sizing:border-box;background:#dddddd;border:2px solid #6d6d6d"></div>
<div class="t" style="left:1426.5px;transform:translateX(-50%);top:532.07px;font-size:20px;line-height:20px;color:#000;font-family:'Liberation Sans', sans-serif;">d</div>
<div style="position:absolute;left:1299px;top:571px;width:79px;height:44px;box-sizing:border-box;background:#dddddd;border:2px solid #6d6d6d"></div>
<div class="t" style="left:1338.5px;transform:translateX(-50%);top:585.07px;font-size:20px;line-height:20px;color:#000;font-family:'Liberation Sans', sans-serif;">e</div>
<div style="position:absolute;left:1387px;top:571px;width:79px;height:44px;box-sizing:border-box;background:#dddddd;border:2px solid #6d6d6d"></div>
<div class="t" style="left:1426.5px;transform:translateX(-50%);top:585.07px;font-size:20px;line-height:20px;color:#000;font-family:'Liberation Sans', sans-serif;">f</div>
<div style="position:absolute;left:1299px;top:624px;width:79px;height:44px;box-sizing:border-box;background:#dddddd;border:2px solid #6d6d6d"></div>
<div class="t" style="left:1338.5px;transform:translateX(-50%);top:638.07px;font-size:20px;line-height:20px;color:#000;font-family:'Liberation Sans', sans-serif;">g</div>
<div style="position:absolute;left:1387px;top:624px;width:79px;height:44px;box-sizing:border-box;background:#dddddd;border:2px solid #6d6d6d"></div>
<div class="t" style="left:1426.5px;transform:translateX(-50%);top:638.07px;font-size:20px;line-height:20px;color:#000;font-family:'Liberation Sans', sans-serif;">h</div>
<div style="position:absolute;left:1299px;top:677px;width:79px;height:44px;box-sizing:border-box;background:#dddddd;border:2px solid #6d6d6d"></div>
<div class="t" style="left:1338.5px;transform:translateX(-50%);top:691.07px;font-size:20px;line-height:20px;color:#000;font-family:'Liberation Sans', sans-serif;">i</div>
<div style="position:absolute;left:1387px;top:677px;width:79px;height:44px;box-sizing:border-box;background:#dddddd;border:2px solid #6d6d6d"></div>
<div class="t" style="left:1426.5px;transform:translateX(-50%);top:691.07px;font-size:20px;line-height:20px;color:#000;font-family:'Liberation Sans', sans-serif;">j</div>
<div style="position:absolute;left:18px;top:781px;width:79px;height:44px;box-sizing:border-box;background:#dddddd;border:2px solid #6d6d6d"></div>
<div class="t" style="left:57.5px;transform:translateX(-50%);top:795.07px;font-size:20px;line-height:20px;color:#000;font-family:'Liberation Sans', sans-serif;">A</div>
<div style="position:absolute;left:18px;top:843px;width:79px;height:44px;box-sizing:border-box;background:#dddddd;border:2px solid #6d6d6d"></div>
<div class="t" style="left:57.5px;transform:translateX(-50%);top:857.07px;font-size:20px;line-height:20px;color:#000;font-family:'Liberation Sans', sans-serif;">B</div>
<div style="position:absolute;left:115px;top:781px;width:1367px;height:44px;box-sizing:border-box;background:#fff;border:2px solid #a6a6ae"></div>
<div style="position:absolute;left:115px;top:843px;width:1367px;height:44px;box-sizing:border-box;background:#fff;border:2px solid #a6a6ae"></div>
<div class="t" style="left:122px;top:794.22px;font-size:21px;line-height:21px;color:#000;font-family:'Liberation Sans', sans-serif;letter-spacing:0.45px">(<svg class="gl" width="0.670em" height="1.048em" viewBox="0 -800 640 1000" style="vertical-align:-0.210em"><g fill="none" stroke="currentColor" stroke-linejoin="miter"><path d="M95,-600 H540" stroke-width="75"/><path d="M130,-315 H540" stroke-width="70"/><path d="M95,-38 H540" stroke-width="75"/><path d="M500,-635 V0" stroke-width="85"/></g></svg>x: <svg class="gl" width="0.922em" height="1.048em" viewBox="0 -800 880 1000" style="vertical-align:-0.210em"><g fill="none" stroke="currentColor" stroke-linejoin="miter"><path d="M135,-700 L480,-35" stroke-width="88"/><path d="M830,-700 L480,-35" stroke-width="65"/><path d="M260,-476 H700" stroke-width="70"/><path d="M425,-45 L480,0 L535,-45" stroke-width="65"/></g></svg>y: ¬P(y,x)) <svg class="gl" width="0.928em" height="1.048em" viewBox="0 -800 886 1000" style="vertical-align:-0.210em"><g fill="none" stroke="currentColor" stroke-linejoin="miter"><path d="M160,-10 L418,-450 L676,-10" stroke-width="78"/></g></svg> <svg class="gl" width="0.670em" height="1.048em" viewBox="0 -800 640 1000" style="vertical-align:-0.210em"><g fill="none" stroke="currentColor" stroke-linejoin="miter"><path d="M95,-600 H540" stroke-width="75"/><path d="M130,-315 H540" stroke-width="70"/><path d="M95,-38 H540" stroke-width="75"/><path d="M500,-635 V0" stroke-width="85"/></g></svg>x: <svg class="gl" width="0.670em" height="1.048em" viewBox="0 -800 640 1000" style="vertical-align:-0.210em"><g fill="none" stroke="currentColor" stroke-linejoin="miter"><path d="M95,-600 H540" stroke-width="75"/><path d="M130,-315 H540" stroke-width="70"/><path d="M95,-38 H540" stroke-width="75"/><path d="M500,-635 V0" stroke-width="85"/></g></svg>y: x≠y</div>
<div class="t" style="left:122px;top:856.22px;font-size:21px;line-height:21px;color:#000;font-family:'Liberation Sans', sans-serif;letter-spacing:0.2px">(<svg class="gl" width="0.670em" height="1.048em" viewBox="0 -800 640 1000" style="vertical-align:-0.210em"><g fill="none" stroke="currentColor" stroke-linejoin="miter"><path d="M95,-600 H540" stroke-width="75"/><path d="M130,-315 H540" stroke-width="70"/><path d="M95,-38 H540" stroke-width="75"/><path d="M500,-635 V0" stroke-width="85"/></g></svg>x: <svg class="gl" width="0.670em" height="1.048em" viewBox="0 -800 640 1000" style="vertical-align:-0.210em"><g fill="none" stroke="currentColor" stroke-linejoin="miter"><path d="M95,-600 H540" stroke-width="75"/><path d="M130,-315 H540" stroke-width="70"/><path d="M95,-38 H540" stroke-width="75"/><path d="M500,-635 V0" stroke-width="85"/></g></svg>y: ¬P(y,x)) <svg class="gl" width="0.928em" height="1.048em" viewBox="0 -800 886 1000" style="vertical-align:-0.210em"><g fill="none" stroke="currentColor" stroke-linejoin="miter"><path d="M160,-10 L418,-450 L676,-10" stroke-width="78"/></g></svg> <svg class="gl" width="0.922em" height="1.048em" viewBox="0 -800 880 1000" style="vertical-align:-0.210em"><g fill="none" stroke="currentColor" stroke-linejoin="miter"><path d="M135,-700 L480,-35" stroke-width="88"/><path d="M830,-700 L480,-35" stroke-width="65"/><path d="M260,-476 H700" stroke-width="70"/><path d="M425,-45 L480,0 L535,-45" stroke-width="65"/></g></svg>y: {<svg class="gl" width="0.670em" height="1.048em" viewBox="0 -800 640 1000" style="vertical-align:-0.210em"><g fill="none" stroke="currentColor" stroke-linejoin="miter"><path d="M95,-600 H540" stroke-width="75"/><path d="M130,-315 H540" stroke-width="70"/><path d="M95,-38 H540" stroke-width="75"/><path d="M500,-635 V0" stroke-width="85"/></g></svg>x: P(x,y) <svg class="gl" width="0.950em" height="1.000em" viewBox="0 -800 950 1000" style="vertical-align:-0.200em"><g fill="none" stroke="currentColor" stroke-linejoin="miter"><path d="M130,-375 H760" stroke-width="70"/><path d="M130,-200 H760" stroke-width="70"/><path d="M640,-490 L845,-287 L640,-85" stroke-width="70"/></g></svg> R(x,y)} <svg class="gl" width="0.950em" height="1.000em" viewBox="0 -800 950 1000" style="vertical-align:-0.200em"><g fill="none" stroke="currentColor" stroke-linejoin="miter"><path d="M230,-375 H730" stroke-width="70"/><path d="M230,-200 H730" stroke-width="70"/><path d="M640,-490 L845,-287 L640,-85" stroke-width="70"/><path d="M320,-490 L115,-287 L320,-85" stroke-width="70"/></g></svg> {[<svg class="gl" width="0.922em" height="1.048em" viewBox="0 -800 880 1000" style="vertical-align:-0.210em"><g fill="none" stroke="currentColor" stroke-linejoin="miter"><path d="M135,-700 L480,-35" stroke-width="88"/><path d="M830,-700 L480,-35" stroke-width="65"/><path d="M260,-476 H700" stroke-width="70"/><path d="M425,-45 L480,0 L535,-45" stroke-width="65"/></g></svg>x: P(x,y)] <svg class="gl" width="0.950em" height="1.000em" viewBox="0 -800 950 1000" style="vertical-align:-0.200em"><g fill="none" stroke="currentColor" stroke-linejoin="miter"><path d="M130,-375 H760" stroke-width="70"/><path d="M130,-200 H760" stroke-width="70"/><path d="M640,-490 L845,-287 L640,-85" stroke-width="70"/></g></svg> <svg class="gl" width="0.670em" height="1.048em" viewBox="0 -800 640 1000" style="vertical-align:-0.210em"><g fill="none" stroke="currentColor" stroke-linejoin="miter"><path d="M95,-600 H540" stroke-width="75"/><path d="M130,-315 H540" stroke-width="70"/><path d="M95,-38 H540" stroke-width="75"/><path d="M500,-635 V0" stroke-width="85"/></g></svg>x: R(x,y)}</div>
<div class="t" style="left:19px;top:901.07px;font-size:20px;line-height:20px;color:#000;font-family:'Liberation Sans', sans-serif;">Ready to use</div>
<div class="t" style="right:15.5px;top:901.07px;font-size:20px;line-height:20px;color:#000;font-family:'Liberation Sans', sans-serif;letter-spacing:0.4px">User: unknown</div>
<div style="position:absolute;left:536px;top:234px;width:496px;height:299px;box-sizing:border-box;border:2px solid #8583da;border-radius:12px;background:#f0f0f0;overflow:hidden;box-shadow:0 10px 24px rgba(0,0,0,0.22),0 28px 80px rgba(0,0,0,0.30);z-index:20"><div style="position:absolute;left:0;top:0;right:0;height:50px;background:#8e8bd8"></div><div style="position:absolute;left:0;top:50px;right:0;height:154px;background:#fff"></div></div>
<div id="dlg" style="position:absolute;left:0;top:0;z-index:21">
<div class="t" style="left:551px;top:252.07px;font-size:20px;line-height:20px;color:#000;font-family:'Liberation Sans', sans-serif;">Spass Answer</div>
<svg style="position:absolute;left:993px;top:252px" width="17" height="17" viewBox="0 0 17 17"><path d="M1,1 L16,16 M16,1 L1,16" stroke="#000" stroke-width="1.6"/></svg>
<svg style="position:absolute;left:577px;top:335px" width="56" height="56" viewBox="0 0 56 56"><defs><linearGradient id="ig" x1="0" y1="0" x2="1" y2="1"><stop offset="0" stop-color="#22a0e8"/><stop offset="1" stop-color="#0562c4"/></linearGradient></defs><circle cx="28" cy="28" r="28" fill="url(#ig)"/><circle cx="28" cy="16.2" r="1.9" fill="#fff"/><rect x="26.8" y="22.5" width="2.4" height="19.5" fill="#fff"/></svg>
<div class="t" style="left:646px;top:355.07px;font-size:20px;line-height:20px;color:#000;font-family:'Liberation Sans', sans-serif;letter-spacing:-0.62px">TRUE. B is a logical consequence of A.</div>
<div style="position:absolute;left:861px;top:459px;width:136px;height:47px;box-sizing:border-box;background:#fdfdfd;border:1.5px solid #0a67c0;border-radius:5px"></div>
<div class="t" style="left:929px;transform:translateX(-50%);top:474.07px;font-size:20px;line-height:20px;color:#000;font-family:'Liberation Sans', sans-serif;">OK</div>
</div>
</body></html>
